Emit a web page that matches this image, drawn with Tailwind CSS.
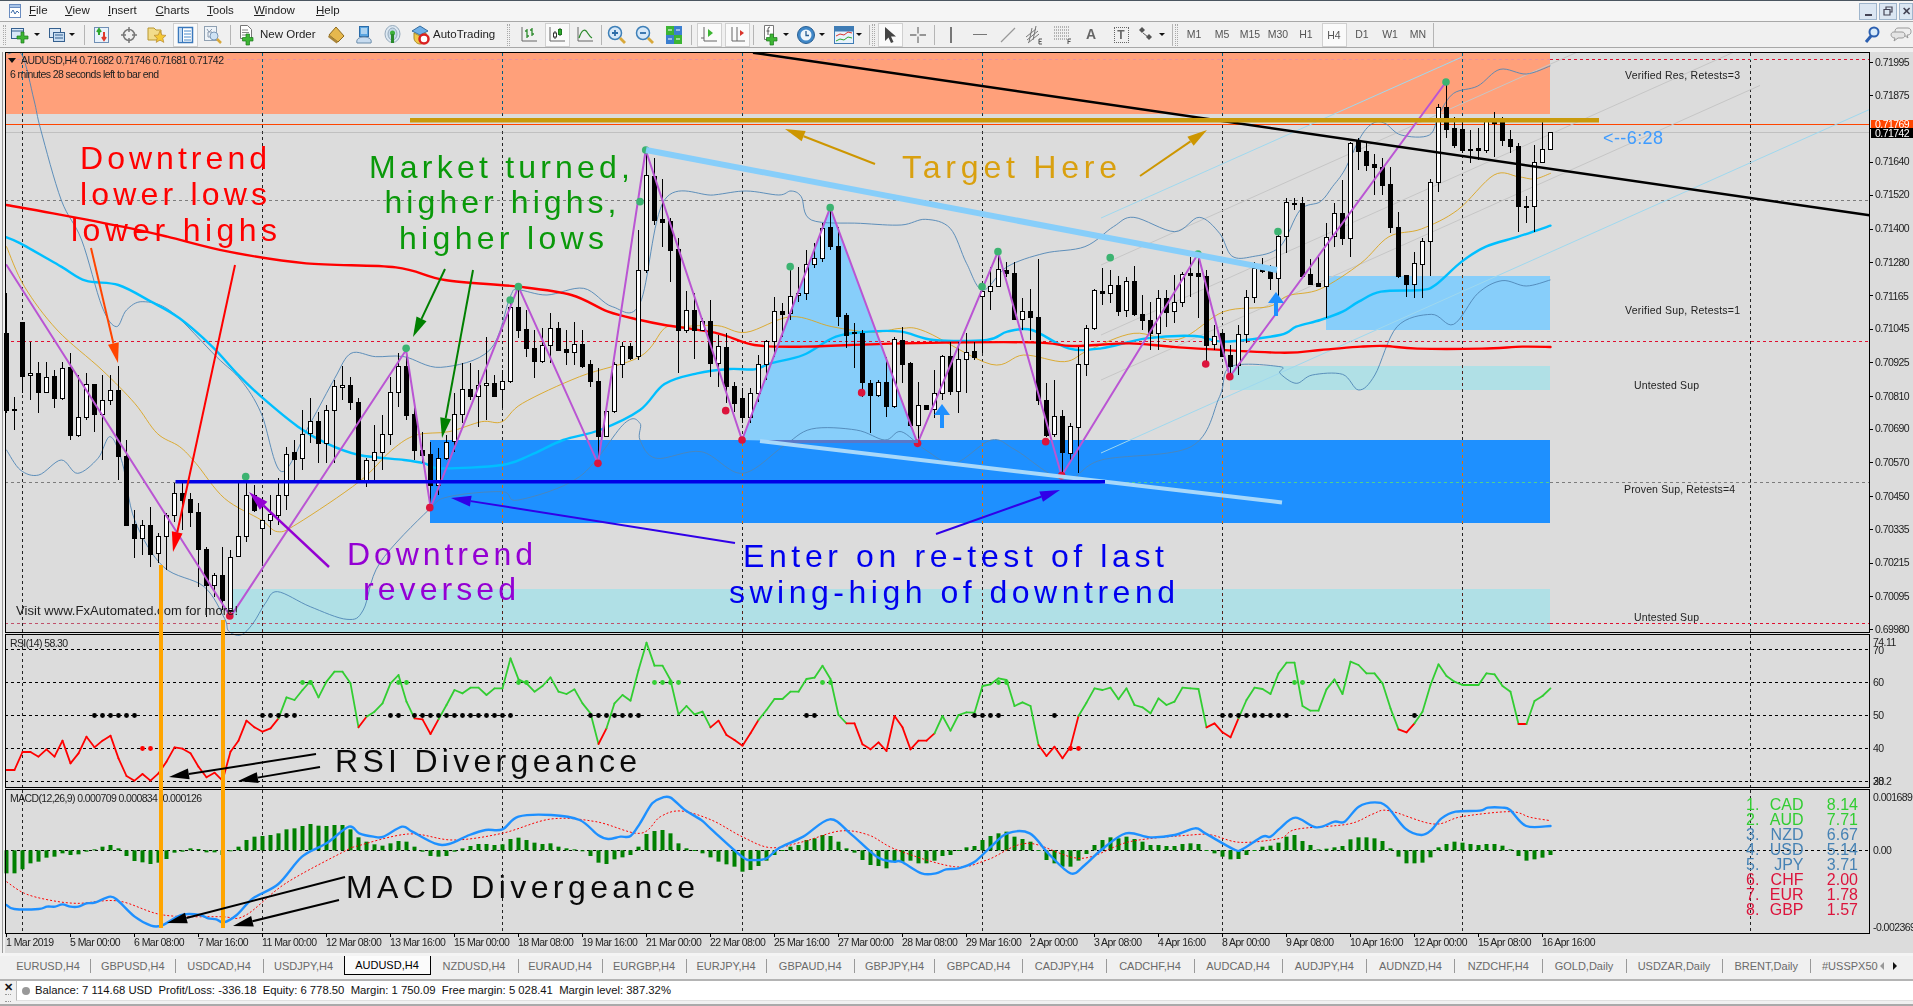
<!DOCTYPE html>
<html>
<head>
<meta charset="utf-8">
<script src="https://cdn.jsdelivr.net/npm/@tailwindcss/browser@4"></script>
</head>
<body class="m-0 overflow-hidden bg-[#f0f0f0]">
<div class="w-[1913px] h-[1006px] flex flex-col overflow-hidden bg-[#f0f0f0] text-[#222] [font-family:'Liberation_Sans',sans-serif]">

<!-- menu bar -->
<div class="h-[22px] shrink-0 flex items-center bg-[#f5f5f5] border-t border-t-[#4a5560] border-b border-b-[#a8a8a8] text-[11.5px]">
  <div class="w-[29px] flex justify-center">
    <svg width="16" height="16" viewBox="0 0 16 16"><rect x="2.5" y="1.5" width="11" height="13" fill="#fff" stroke="#6a8cc0"/><rect x="2.5" y="1.5" width="11" height="3" fill="#a8c4e8" stroke="#6a8cc0"/><path d="M4 10l2-3 2 4 2-3 2 2" fill="none" stroke="#3a6aa8"/></svg>
  </div>
  <span class="w-[36px]"><u>F</u>ile</span>
  <span class="w-[43px]"><u>V</u>iew</span>
  <span class="w-[47.5px]"><u>I</u>nsert</span>
  <span class="w-[51.5px]"><u>C</u>harts</span>
  <span class="w-[47px]"><u>T</u>ools</span>
  <span class="w-[62px]"><u>W</u>indow</span>
  <span><u>H</u>elp</span>
  <div class="ml-auto flex items-center gap-[2px] pr-[0px]">
    <div class="w-[18px] h-[17px] border border-[#9fb5cc] bg-[#dbe6f2] flex items-end justify-center pb-[3px]"><div class="w-[7px] h-[2px] bg-[#445]"></div></div>
    <div class="w-[18px] h-[17px] border border-[#9fb5cc] bg-[#dbe6f2] flex items-center justify-center"><svg width="10" height="10" viewBox="0 0 10 10"><path d="M3 3V1h6v5H7M1 3.5h6v5.500H1z" fill="none" stroke="#445" stroke-width="1.200"/></svg></div>
    <div class="w-[14px] h-[17px] border border-[#9fb5cc] bg-[#dbe6f2] flex items-center justify-center text-[11px] font-bold text-[#445]">✕</div>
  </div>
</div>

<!-- toolbar -->
<div class="h-[26px] shrink-0 flex items-center bg-[#f0f0f0] border-b border-b-[#a8a8a8] text-[11.5px] text-[#222]">
  <div class="w-[8px] flex justify-center"><div class="w-[3px] h-[20px] border-x border-dotted border-[#aaa]"></div></div>
  <!-- new chart -->
  <div class="w-[24px] flex justify-center"><svg width="20" height="20" viewBox="0 0 20 20"><rect x="1.500" y="3.500" width="12" height="10" fill="#d8e8f8" stroke="#35608f"/><path d="M1 6h13" stroke="#35608f"/><path d="M11 7h3v4h4v3h-4v4h-3v-4H7v-3h4z" fill="#3db534" stroke="#1c7a1c" stroke-width=".7"/></svg></div>
  <div class="w-[10px] flex justify-center"><div class="border-x-[3px] border-x-transparent border-t-[3px] border-t-[#111]"></div></div>
  <div class="w-[5px]"></div>
  <!-- profiles -->
  <div class="w-[20px] flex justify-center"><svg width="18" height="18" viewBox="0 0 18 18"><rect x="1.500" y="2.500" width="11" height="9" fill="#dbe8f5" stroke="#35608f"/><rect x="5.500" y="6.500" width="11" height="9" fill="#c6dcf2" stroke="#35608f"/><path d="M7 9h8M7 12h8" stroke="#35608f"/></svg></div>
  <div class="w-[10px] flex justify-center"><div class="border-x-[3px] border-x-transparent border-t-[3px] border-t-[#111]"></div></div>
  <div class="w-[7px]"></div>
  <div class="w-px h-[20px] bg-[#b5b5b5]"></div>
  <div class="w-[2px]"></div>
  <!-- market watch -->
  <div class="w-[28px] flex justify-center"><svg width="17" height="18" viewBox="0 0 17 18"><rect x="1.500" y="1.500" width="14" height="15" fill="#e8f2fb" stroke="#6f8fb5"/><path d="M6 9V4M4 6l2-3 2 3" fill="none" stroke="#2ea82e" stroke-width="2"/><path d="M11 6v7M9 11l2 3 2-3" fill="none" stroke="#e0392b" stroke-width="2"/></svg></div>
  <!-- crosshair -->
  <div class="w-[28px] flex justify-center"><svg width="18" height="18" viewBox="0 0 18 18"><circle cx="9" cy="9" r="5.500" fill="none" stroke="#777" stroke-width="1.500"/><path d="M9 1v5M9 12v5M1 9h5M12 9h5" stroke="#777" stroke-width="1.500"/></svg></div>
  <!-- navigator star -->
  <div class="w-[28px] flex justify-center"><svg width="20" height="19" viewBox="0 0 20 19"><path d="M1 3h6l2 2h5v10H1z" fill="#f2dc8a" stroke="#b8962e"/><path d="M13 6l1.800 4 4.200.4-3.200 2.800 1 4.200-3.800-2.300-3.800 2.300 1-4.200L7 10.400l4.200-.4z" fill="#f5c935" stroke="#b8882e" stroke-width=".7"/></svg></div>
  <!-- terminal pressed -->
  <div class="w-[28px] flex justify-center"><div class="w-[25px] h-[24px] bg-[#fafafa] border border-[#d0d0d0] flex items-center justify-center"><svg width="17" height="18" viewBox="0 0 17 18"><rect x="1.500" y="1.500" width="14" height="15" fill="#fff" stroke="#3a78bc" stroke-width="1.500"/><rect x="1.500" y="1.500" width="4" height="15" fill="#bcd7f2" stroke="#3a78bc"/><path d="M7 5h7M7 8h7M7 11h7M7 14h7" stroke="#4a8ccc"/></svg></div></div>
  <!-- tester -->
  <div class="w-[28px] flex justify-center"><svg width="20" height="20" viewBox="0 0 20 20"><rect x="1.500" y="1.500" width="12" height="14" fill="#eef3f8" stroke="#8fa0b2"/><path d="M4 4l2 3 3-3M5 7h4v5H5z" fill="none" stroke="#8a9aae"/><circle cx="11" cy="11" r="4" fill="#cfe3f5" stroke="#7d9ab8"/><path d="M14 14l4 4" stroke="#d8a83a" stroke-width="2.500"/></svg></div>
  <div class="w-[3px]"></div>
  <div class="w-px h-[20px] bg-[#b5b5b5]"></div>
  <div class="w-[7px]"></div>
  <!-- new order -->
  <div class="w-[18px] flex justify-center"><svg width="18" height="22" viewBox="0 0 18 22"><path d="M2.500 1.500h7l4 4v9h-11z" fill="#fff" stroke="#777"/><path d="M4 6h6M4 8.500h7M4 11h5" stroke="#888"/><path d="M8 10h3.500v3.500H15V17h-3.500v4H8v-4H4.500v-3.500H8z" fill="#3db534" stroke="#1c7a1c" stroke-width=".7"/></svg></div>
  <div class="w-[4px]"></div>
  <div class="w-[62px] whitespace-nowrap">New Order</div>
  <div class="w-[28px] flex justify-center"><svg width="18" height="18" viewBox="0 0 18 18"><path d="M9 1l8 9-6 6-9-7z" fill="#e6b84e" stroke="#8d6a1e"/><path d="M2 9l9 7-1.500 1.500L1 11z" fill="#a8843a"/></svg></div>
  <div class="w-[28px] flex justify-center"><svg width="18" height="20" viewBox="0 0 18 20"><rect x="4.500" y="1.500" width="9" height="10" fill="#5aa5e0" stroke="#2a6ba8"/><path d="M6 4h6M6 6h6M6 8h6" stroke="#fff"/><path d="M2 18c-1-3 1-6 7-6s8 3 7 6z" fill="#c8dcf0" stroke="#6a8caa"/></svg></div>
  <div class="w-[29px] flex justify-center"><svg width="17" height="19" viewBox="0 0 17 19"><ellipse cx="8.500" cy="9" rx="7.500" ry="8.500" fill="#dce8f2" stroke="#95a9bb"/><ellipse cx="8.500" cy="9" rx="4.500" ry="6" fill="#c6d8e8" stroke="#95a9bb"/><circle cx="8.500" cy="8" r="2.500" fill="#3bb03b"/><path d="M8.500 9v9" stroke="#2a8a2a" stroke-width="3"/></svg></div>
  <div class="w-[26px] flex justify-center"><svg width="19" height="20" viewBox="0 0 19 20"><path d="M1 6l8-5 8 5-8 4z" fill="#6fb0e8" stroke="#356c9e"/><path d="M3 8v5c0 3 3 6 6 6s6-2 6-6V8l-6 3z" fill="#f0c94a" stroke="#a88b28"/><circle cx="13" cy="14" r="4.500" fill="#fff" stroke="#d92020" stroke-width="2.500"/></svg></div>
  <div class="w-[73px] whitespace-nowrap">AutoTrading</div>
  <div class="w-[4px] flex justify-center"><div class="w-[3px] h-[22px] border-x border-dotted border-[#aaa]"></div></div>
  <div class="w-[5px]"></div>
  <!-- bar/candle/line -->
  <div class="w-[28px] flex justify-center"><svg width="18" height="18" viewBox="0 0 18 18"><path d="M2 1v14h15" fill="none" stroke="#666"/><path d="M7 3v9M5 5h2M7 10h2M12 2v8M10 4h2M12 8h2" stroke="#2c8a2c" stroke-width="1.300"/></svg></div>
  <div class="w-[28px] flex justify-center"><div class="w-[25px] h-[24px] bg-[#fafafa] border border-[#d0d0d0] flex items-center justify-center"><svg width="18" height="18" viewBox="0 0 18 18"><path d="M2 1v14h15" fill="none" stroke="#666"/><path d="M7 5v8M12 2v8" stroke="#333"/><rect x="5.500" y="7" width="3" height="4" fill="#fff" stroke="#333"/><rect x="10.500" y="3.500" width="3" height="5" fill="#2ea82e" stroke="#1c7a1c"/></svg></div></div>
  <div class="w-[28px] flex justify-center"><svg width="18" height="18" viewBox="0 0 18 18"><path d="M2 1v14h15" fill="none" stroke="#666"/><path d="M3 12c3-9 6-9 8-6s3 5 5 6" fill="none" stroke="#2c8a2c" stroke-width="1.300"/></svg></div>
  <div class="w-[2px]"></div>
  <div class="w-px h-[20px] bg-[#b5b5b5]"></div>
  <div class="w-[1px]"></div>
  <!-- zoom -->
  <div class="w-[28px] flex justify-center"><svg width="20" height="20" viewBox="0 0 20 20"><circle cx="8" cy="8" r="6.500" fill="#d6e8f8" stroke="#3d7fb8" stroke-width="1.500"/><path d="M5 8h6M8 5v6" stroke="#2c6ca8" stroke-width="1.800"/><path d="M13 13l5 5" stroke="#d8a83a" stroke-width="2.800"/></svg></div>
  <div class="w-[28px] flex justify-center"><svg width="20" height="20" viewBox="0 0 20 20"><circle cx="8" cy="8" r="6.500" fill="#d6e8f8" stroke="#3d7fb8" stroke-width="1.500"/><path d="M5 8h6" stroke="#2c6ca8" stroke-width="1.800"/><path d="M13 13l5 5" stroke="#d8a83a" stroke-width="2.800"/></svg></div>
  <div class="w-[1px]"></div>
  <div class="w-[28px] flex justify-center"><svg width="18" height="20" viewBox="0 0 18 20"><rect x="1" y="1" width="8" height="9" fill="#3db534"/><rect x="9" y="1" width="8" height="9" fill="#3b7fd0"/><rect x="1" y="10" width="8" height="9" fill="#3b7fd0"/><rect x="9" y="10" width="8" height="9" fill="#3db534"/><path d="M3 5h4M11 5h4M3 14h4M11 14h4" stroke="#fff"/></svg></div>
  <div class="w-[3px]"></div>
  <div class="w-px h-[20px] bg-[#b5b5b5]"></div>
  <div class="w-[3px]"></div>
  <div class="w-[28px] flex justify-center"><div class="w-[25px] h-[24px] bg-[#fafafa] border border-[#d0d0d0] flex items-center justify-center"><svg width="18" height="18" viewBox="0 0 18 18"><path d="M4 1v14h13M1 12h3" fill="none" stroke="#666"/><path d="M8 3l5 4-5 4z" fill="#3db534"/></svg></div></div>
  <div class="w-[28px] flex justify-center"><div class="w-[25px] h-[24px] bg-[#fafafa] border border-[#d0d0d0] flex items-center justify-center"><svg width="18" height="18" viewBox="0 0 18 18"><path d="M4 1v14h13M9 1v14" fill="none" stroke="#666"/><path d="M16 7l-4-3v6z" fill="#d9342b"/></svg></div></div>
  <div class="w-[2px]"></div>
  <div class="w-px h-[20px] bg-[#b5b5b5]"></div>
  <div class="w-[5px]"></div>
  <div class="w-[24px] flex justify-center"><svg width="18" height="22" viewBox="0 0 18 22"><path d="M2.500 1.500h9v14h-9z" fill="#fff" stroke="#777"/><path d="M6 11V5q0-2 2-2M4.500 7h3" fill="none" stroke="#555"/><path d="M8 10h3.500v3.500H15V17h-3.500v4H8v-4H4.500v-3.500H8z" fill="#3db534" stroke="#1c7a1c" stroke-width=".7"/></svg></div>
  <div class="w-[6px] flex justify-center"><div class="border-x-[3px] border-x-transparent border-t-[3px] border-t-[#111]"></div></div>
  <div class="w-[5px]"></div>
  <div class="w-[24px] flex justify-center"><svg width="20" height="20" viewBox="0 0 20 20"><circle cx="10" cy="10" r="8.500" fill="#3f87c8" stroke="#2a5f92"/><circle cx="10" cy="10" r="5.500" fill="#eef5fb"/><path d="M10 6v4.500h3" fill="none" stroke="#2a5f92" stroke-width="1.300"/></svg></div>
  <div class="w-[8px] flex justify-center"><div class="border-x-[3px] border-x-transparent border-t-[3px] border-t-[#111]"></div></div>
  <div class="w-[6px]"></div>
  <div class="w-[24px] flex justify-center"><svg width="20" height="18" viewBox="0 0 20 18"><rect x=".5" y=".5" width="19" height="17" fill="#e8f2fb" stroke="#3f7cb5"/><rect x=".5" y=".5" width="19" height="5" fill="#3f7cb5"/><path d="M2 10l4-2 4 1 4-3 4 1" fill="none" stroke="#d9342b"/><path d="M2 15l4-2 4 1 4-3 4 1" fill="none" stroke="#2ea82e"/></svg></div>
  <div class="w-[6px] flex justify-center"><div class="border-x-[3px] border-x-transparent border-t-[3px] border-t-[#111]"></div></div>
  <div class="w-[7px]"></div>
  <div class="w-px h-[20px] bg-[#b5b5b5]"></div>
  <div class="w-[6px] flex justify-center"><div class="w-[3px] h-[22px] border-x border-dotted border-[#aaa]"></div></div>
  <!-- cursor -->
  <div class="w-[28px] flex justify-center"><div class="w-[25px] h-[24px] bg-[#fafafa] border border-[#d0d0d0] flex items-center justify-center"><svg width="14" height="18" viewBox="0 0 14 18"><path d="M2 1v14l3.500-3.500L8 17l2.500-1L8 10.500h5z" fill="#444"/></svg></div></div>
  <div class="w-[28px] flex justify-center"><svg width="18" height="18" viewBox="0 0 18 18"><path d="M9 1v6.500M9 10.500V17M1 9h6.500M10.500 9H17" stroke="#777" stroke-width="1.300"/></svg></div>
  <div class="w-[2px]"></div>
  <div class="w-px h-[20px] bg-[#b5b5b5]"></div>
  <div class="w-[2px]"></div>
  <div class="w-[28px] flex justify-center"><div class="w-[1.500px] h-[16px] bg-[#777]"></div></div>
  <div class="w-[29px] flex justify-center"><div class="w-[14px] h-[1.500px] bg-[#777]"></div></div>
  <div class="w-[27px] flex justify-center"><svg width="16" height="16" viewBox="0 0 16 16"><path d="M1 15L15 1" stroke="#999" stroke-width="1.300"/></svg></div>
  <div class="w-[28px] flex justify-center"><svg width="20" height="20" viewBox="0 0 20 20"><path d="M1 12l10-8M2 15l11-9M3 18l11-9M7 3l-3 14M11 1l-3 14" stroke="#777"/><path d="M17 14h-3v5h3M14 16.500h2.500" fill="none" stroke="#555"/></svg></div>
  <div class="w-[28px] flex justify-center"><svg width="20" height="20" viewBox="0 0 20 20"><path d="M1 2h15M1 5h15M1 8h15M1 11h15M1 14h13" stroke="#777" stroke-dasharray="1 1"/><path d="M15 19v-5h3M15 16.500h2.500" fill="none" stroke="#555"/></svg></div>
  <div class="w-[28px] flex justify-center font-bold text-[14px] text-[#666]">A</div>
  <div class="w-[2px]"></div>
  <div class="w-[28px] flex justify-center"><div class="w-[15px] h-[16px] border border-dotted border-[#666] flex items-center justify-center font-bold text-[12px] leading-none text-[#666]">T</div></div>
  <div class="w-[22px] flex justify-center"><svg width="18" height="18" viewBox="0 0 18 18"><path d="M5 1l3 3-3 3-3-3z" fill="#555"/><path d="M12 8l3 3-3 3-3-3z" fill="#555"/><path d="M6 7l5 4" stroke="#555"/></svg></div>
  <div class="w-[10px] flex justify-center"><div class="border-x-[3px] border-x-transparent border-t-[3px] border-t-[#111]"></div></div>
  <div class="w-[5px]"></div>
  <div class="w-px h-[22px] bg-[#b5b5b5]"></div>
  <div class="w-[7px] flex justify-center"><div class="w-[3px] h-[22px] border-x border-dotted border-[#aaa]"></div></div>
  <div class="flex items-center text-[10.5px] text-[#555] text-center">
    <div class="w-[28px]">M1</div><div class="w-[28px]">M5</div><div class="w-[28px]">M15</div><div class="w-[28px]">M30</div><div class="w-[28px]">H1</div>
    <div class="w-[28px] flex justify-center"><div class="w-[25px] h-[24px] leading-[22px] bg-[#fafafa] border border-[#d0d0d0]">H4</div></div>
    <div class="w-[28px]">D1</div><div class="w-[28px]">W1</div><div class="w-[28px]">MN</div>
  </div>
  <div class="w-px h-[24px] bg-[#b5b5b5] ml-[1px]"></div>
  <div class="ml-auto flex items-center gap-[10px] pr-[1px]">
    <svg width="16" height="18" viewBox="0 0 16 18"><circle cx="10" cy="6" r="4.500" fill="#d8ebfb" stroke="#2b5fb0" stroke-width="2"/><path d="M7 10L2 16" stroke="#2b5fb0" stroke-width="3"/></svg>
    <svg width="22" height="17" viewBox="0 0 22 17"><path d="M8 2h10c4 0 4 7 0 7h-1l1 3-4-3H8C4 9 4 2 8 2z" fill="#eee" stroke="#999"/><path d="M4 6h8c4 0 4 6 0 6H8l-4 3 1-3C0 12 0 6 4 6z" fill="#e4e4e4" stroke="#999"/></svg>
  </div>
</div>
<div class="h-[4px] shrink-0 bg-[#f0f0f0]"></div>

<!-- chart canvas -->
<svg id="chart" class="block shrink-0" width="1913" height="904" viewBox="0 52 1913 904">
  <rect x="0" y="52" width="1913" height="904" fill="#dcdcdc"/>
  <rect x="0" y="52" width="5" height="904" fill="#f0f0f0"/>
  <rect x="2" y="52" width="1" height="904" fill="#999"/>
  <rect x="0" y="953" width="1913" height="3" fill="#f4f4f4"/>
  <g id="under"></g>
  <g class="text-[10.500px] fill-[#222]">
    <path d="M8 58h8l-4 5z" fill="#111"/>
    <text x="21" y="64" textLength="203">AUDUSD,H4  0.71682 0.71746 0.71681 0.71742</text>
    <text x="10" y="77.500" textLength="149">6 minutes 28 seconds left to bar end</text>
    <text x="1625" y="79" textLength="115">Verified Res, Retests=3</text>
    <text x="1625" y="314" textLength="115">Verified Sup, Retests=1</text>
    <text x="1634" y="389" textLength="65">Untested Sup</text>
    <text x="1624" y="493" textLength="111">Proven Sup, Retests=4</text>
    <text x="1634" y="621" textLength="65">Untested Sup</text>
    <text x="16" y="614.500" textLength="222" class="text-[13px]">Visit www.FxAutomated.com for more!</text>
    <text x="10" y="647" textLength="58">RSI(14) 58.30</text>
    <text x="10" y="802" textLength="192">MACD(12,26,9) 0.000709 0.000834 -0.000126</text>
  </g>
  <g class="text-[10.500px] fill-[#222] tracking-[-.55px]">
    <text x="1875" y="65.500">0.71995</text>
    <text x="1875" y="99">0.71875</text>
    <text x="1875" y="165">0.71640</text>
    <text x="1875" y="198">0.71520</text>
    <text x="1875" y="232">0.71400</text>
    <text x="1875" y="266">0.71280</text>
    <text x="1875" y="300">0.71165</text>
    <text x="1875" y="332">0.71045</text>
    <text x="1875" y="366">0.70925</text>
    <text x="1875" y="400">0.70810</text>
    <text x="1875" y="432">0.70690</text>
    <text x="1875" y="466">0.70570</text>
    <text x="1875" y="500">0.70450</text>
    <text x="1875" y="533">0.70335</text>
    <text x="1875" y="566">0.70215</text>
    <text x="1875" y="600">0.70095</text>
    <text x="1875" y="633">0.69980</text>
    <text x="1873" y="646">74.11</text>
    <text x="1873" y="654">70</text>
    <text x="1873" y="686">60</text>
    <text x="1873" y="719">50</text>
    <text x="1873" y="752">40</text>
    <text x="1873" y="785">30</text>
    <text x="1873" y="785">28.2</text>
    <text x="1873" y="801">0.001689</text>
    <text x="1873" y="854">0.00</text>
    <text x="1873" y="931">-0.002369</text>
  </g>
  <g class="tracking-[-.55px]">
    <rect x="1871" y="120" width="42" height="9" fill="#ff4500"/>
    <text x="1875" y="128" class="text-[10.500px] fill-[#fff]">0.71769</text>
    <rect x="1871" y="128" width="42" height="10" fill="#000"/>
    <text x="1875" y="137" class="text-[10.500px] fill-[#fff]">0.71742</text>
  </g>
  <g id="over"></g>
  <!-- currency strength -->
  <g class="text-[16px]">
    <g class="fill-[#32cd32]"><text x="1746" y="810">1.</text><text x="1803.500" y="810" text-anchor="end">CAD</text><text x="1858" y="810" text-anchor="end">8.14</text>
    <text x="1746" y="825">2.</text><text x="1803.500" y="825" text-anchor="end">AUD</text><text x="1858" y="825" text-anchor="end">7.71</text></g>
    <g class="fill-[#4682b4]"><text x="1746" y="840">3.</text><text x="1803.500" y="840" text-anchor="end">NZD</text><text x="1858" y="840" text-anchor="end">6.67</text>
    <text x="1746" y="855">4.</text><text x="1803.500" y="855" text-anchor="end">USD</text><text x="1858" y="855" text-anchor="end">5.14</text>
    <text x="1746" y="870">5.</text><text x="1803.500" y="870" text-anchor="end">JPY</text><text x="1858" y="870" text-anchor="end">3.71</text></g>
    <g class="fill-[#dc143c]"><text x="1746" y="885">6.</text><text x="1803.500" y="885" text-anchor="end">CHF</text><text x="1858" y="885" text-anchor="end">2.00</text>
    <text x="1746" y="900">7.</text><text x="1803.500" y="900" text-anchor="end">EUR</text><text x="1858" y="900" text-anchor="end">1.78</text>
    <text x="1746" y="915">8.</text><text x="1803.500" y="915" text-anchor="end">GBP</text><text x="1858" y="915" text-anchor="end">1.57</text></g>
  </g>
  <!-- hand annotations -->
  <g class="text-[32px]">
    <g class="fill-[#ff0000]">
      <text x="80" y="169" textLength="187">Downtrend</text>
      <text x="80" y="205" textLength="187">lower lows</text>
      <text x="71" y="241" textLength="206">lower highs</text>
    </g>
    <g class="fill-[#0a990a]">
      <text x="369" y="178" textLength="261">Market turned,</text>
      <text x="384.500" y="213" textLength="232">higher highs,</text>
      <text x="399" y="249" textLength="205">higher lows</text>
    </g>
    <g class="fill-[#9400d3]">
      <text x="347" y="565" textLength="186">Downtrend</text>
      <text x="363" y="600" textLength="153">reversed</text>
    </g>
    <text x="902" y="178" textLength="215" class="fill-[#d9a00f]">Target Here</text>
    <g class="fill-[#0000ee]">
      <text x="743" y="567" textLength="421">Enter on re-test of last</text>
      <text x="729" y="603" textLength="446">swing-high of downtrend</text>
    </g>
    <g class="fill-[#0a0a0a]">
      <text x="335" y="772" textLength="302">RSI Divergeance</text>
      <text x="346" y="898" textLength="349">MACD Divergeance</text>
    </g>
  </g>
  <text x="1603" y="144" textLength="60" class="text-[18px] fill-[#3d9bff]">&lt;--6:28</text>
</svg>

<!-- date axis overlay row sits on the canvas -->
<div class="relative h-0">
  <div class="absolute left-[6px] bottom-[5px] flex text-[10.500px] tracking-[-.55px] text-[#222] whitespace-nowrap">
    <div class="w-[64px]">1 Mar 2019</div><div class="w-[64px]">5 Mar 00:00</div><div class="w-[64px]">6 Mar 08:00</div><div class="w-[64px]">7 Mar 16:00</div><div class="w-[64px]">11 Mar 00:00</div><div class="w-[64px]">12 Mar 08:00</div><div class="w-[64px]">13 Mar 16:00</div><div class="w-[64px]">15 Mar 00:00</div><div class="w-[64px]">18 Mar 08:00</div><div class="w-[64px]">19 Mar 16:00</div><div class="w-[64px]">21 Mar 00:00</div><div class="w-[64px]">22 Mar 08:00</div><div class="w-[64px]">25 Mar 16:00</div><div class="w-[64px]">27 Mar 00:00</div><div class="w-[64px]">28 Mar 08:00</div><div class="w-[64px]">29 Mar 16:00</div><div class="w-[64px]">2 Apr 00:00</div><div class="w-[64px]">3 Apr 08:00</div><div class="w-[64px]">4 Apr 16:00</div><div class="w-[64px]">8 Apr 00:00</div><div class="w-[64px]">9 Apr 08:00</div><div class="w-[64px]">10 Apr 16:00</div><div class="w-[64px]">12 Apr 00:00</div><div class="w-[64px]">15 Apr 08:00</div><div class="w-[64px]">16 Apr 16:00</div>
  </div>
</div>

<!-- symbol tabs -->
<div class="h-[25px] shrink-0 flex items-start pl-[6px] pt-0 bg-[#f0f0f0] border-b-2 border-b-[#b4b4b4] text-[11px] text-[#6a6a6a] whitespace-nowrap">
  <div class="w-[85px] h-[14px] mt-[3px] border-r border-[#999] text-center leading-[14px]">EURUSD,H4</div>
  <div class="w-[84.500px] h-[14px] mt-[3px] border-r border-[#999] text-center leading-[14px]">GBPUSD,H4</div>
  <div class="w-[88px] h-[14px] mt-[3px] border-r border-[#999] text-center leading-[14px]">USDCAD,H4</div>
  <div class="w-[80px] h-[14px] mt-[3px] text-center leading-[14px]">USDJPY,H4</div>
  <div class="w-[87px] h-[19px] bg-[#fbfbfb] border-x border-b border-[#000] text-[#000] text-center leading-[19px]">AUDUSD,H4</div>
  <div class="w-[88px] h-[14px] mt-[3px] border-r border-[#999] text-center leading-[14px]">NZDUSD,H4</div>
  <div class="w-[84px] h-[14px] mt-[3px] border-r border-[#999] text-center leading-[14px]">EURAUD,H4</div>
  <div class="w-[84px] h-[14px] mt-[3px] border-r border-[#999] text-center leading-[14px]">EURGBP,H4</div>
  <div class="w-[80px] h-[14px] mt-[3px] border-r border-[#999] text-center leading-[14px]">EURJPY,H4</div>
  <div class="w-[88.500px] h-[14px] mt-[3px] border-r border-[#999] text-center leading-[14px]">GBPAUD,H4</div>
  <div class="w-[80px] h-[14px] mt-[3px] border-r border-[#999] text-center leading-[14px]">GBPJPY,H4</div>
  <div class="w-[88px] h-[14px] mt-[3px] border-r border-[#999] text-center leading-[14px]">GBPCAD,H4</div>
  <div class="w-[83.500px] h-[14px] mt-[3px] border-r border-[#999] text-center leading-[14px]">CADJPY,H4</div>
  <div class="w-[88px] h-[14px] mt-[3px] border-r border-[#999] text-center leading-[14px]">CADCHF,H4</div>
  <div class="w-[88px] h-[14px] mt-[3px] border-r border-[#999] text-center leading-[14px]">AUDCAD,H4</div>
  <div class="w-[84.500px] h-[14px] mt-[3px] border-r border-[#999] text-center leading-[14px]">AUDJPY,H4</div>
  <div class="w-[88px] h-[14px] mt-[3px] border-r border-[#999] text-center leading-[14px]">AUDNZD,H4</div>
  <div class="w-[87.500px] h-[14px] mt-[3px] border-r border-[#999] text-center leading-[14px]">NZDCHF,H4</div>
  <div class="w-[84px] h-[14px] mt-[3px] border-r border-[#999] text-center leading-[14px]">GOLD,Daily</div>
  <div class="w-[96px] h-[14px] mt-[3px] border-r border-[#999] text-center leading-[14px]">USDZAR,Daily</div>
  <div class="w-[88.500px] h-[14px] mt-[3px] border-r border-[#999] text-center leading-[14px]">BRENT,Daily</div>
  <div class="w-[67px] h-[14px] mt-[3px] pl-[11px] overflow-hidden leading-[14px]">#USSPX500,Daily</div>
  <div class="w-[8px] h-[14px] mt-[3px] flex items-center justify-center"><div class="border-y-[4px] border-y-transparent border-r-[4px] border-r-[#999]"></div></div>
  <div class="w-[18px] h-[14px] mt-[3px] flex items-center justify-center"><div class="border-y-[4px] border-y-transparent border-l-[4px] border-l-[#111]"></div></div>
</div>

<!-- status bar -->
<div class="flex-1 flex items-start bg-[#f0f0f0] border-b-2 border-b-[#aaa]">
  <div class="w-[16px] flex flex-col items-center pt-[1px]">
    <span class="text-[11px] font-bold leading-[11px] text-[#111]">✕</span>
    <div class="w-[6px] h-[8px] mt-[1px] border-y border-dotted border-[#999]"></div>
  </div>
  <div class="flex-1 h-[20px] bg-white border-b border-[#e0e0e0] border-l border-l-[#bbb] flex items-center pl-[5px] text-[11.300px] text-[#111]">
    <div class="w-[8px] h-[8px] rounded-full bg-[#999] mr-[5px]"></div>
    <span class="whitespace-pre">Balance: 7 114.68 USD  Profit/Loss: -336.18  Equity: 6 778.50  Margin: 1 750.09  Free margin: 5 028.41  Margin level: 387.32%</span>
  </div>
</div>
</div>

<script>
const NS='http://www.w3.org/2000/svg';
const under=document.getElementById('under'), over=document.getElementById('over');
function el(t,a,p){const e=document.createElementNS(NS,t);for(const k in a)e.setAttribute(k,a[k]);(p||under).appendChild(e);return e;}
function rect(x,y,w,h,f,p){return el('rect',{x,y,width:w,height:h,fill:f},p);}
function line(x1,y1,x2,y2,s,w,o,p){const a={x1,y1,x2,y2,stroke:s,'stroke-width':w||1};if(o)Object.assign(a,o);return el('line',a,p);}
function pl(pts,s,w,o,p){const a={points:pts.map(q=>q.join(',')).join(' '),fill:'none',stroke:s,'stroke-width':w,'stroke-linejoin':'round','stroke-linecap':'round'};if(o)Object.assign(a,o);return el('polyline',a,p);}
// smooth curve through points (Catmull-Rom)
function sm(pts,s,w,o,p){
  let d='M'+pts[0][0]+' '+pts[0][1];
  for(let i=0;i<pts.length-1;i++){
    const a=pts[Math.max(i-1,0)],b=pts[i],c=pts[i+1],e=pts[Math.min(i+2,pts.length-1)];
    d+=' C'+(b[0]+(c[0]-a[0])/6)+' '+(b[1]+(c[1]-a[1])/6)+' '+(c[0]-(e[0]-b[0])/6)+' '+(c[1]-(e[1]-b[1])/6)+' '+c[0]+' '+c[1];
  }
  const at={d,fill:'none',stroke:s,'stroke-width':w,'stroke-linejoin':'round','stroke-linecap':'round'};if(o)Object.assign(at,o);return el('path',at,p);
}
// zoom-coordinate converters
const Z=(x0,sx,y0,a)=>{const r=[];for(let i=0;i<a.length;i+=2)r.push([x0+a[i]/sx,y0+a[i+1]/3]);return r;};
const L=a=>Z(0,2.45,130,a),M=a=>Z(640,2.45,130,a),R=a=>Z(1280,2.477,130,a);
const crisp={'shape-rendering':'crispEdges'};

// zones
rect(5,52,1545,62,'#ffa07a');
rect(430,440,1120,83,'#1e90ff');
rect(1326,276,224,54,'#87cefa');
rect(1230,366,320,24,'#b0e0e6');
rect(230,589,1320,43,'#b0e0e6');
el('polygon',{points:'742,440 830,208 917.5,443',fill:'#87cefa'});

// horizontal dashed grid of the price pane
const dash={'stroke-dasharray':'3 3',...crisp};
line(5,59.5,1550,59.5,'#e88fa0',1,dash);line(1550,59.5,1870,59.5,'#e01030',1,dash);
line(5,200.5,1870,200.5,'#7c7c7c',1,dash);
line(5,341.5,1870,341.5,'#e01030',1,dash);
line(5,482.5,430,482.5,'#7c7c7c',1,dash);line(430,482.5,1550,482.5,'#50d090',1,dash);line(1550,482.5,1870,482.5,'#7c7c7c',1,dash);
line(5,623.5,1550,623.5,'#c0506a',1,dash);line(1550,623.5,1870,623.5,'#e01030',1,dash);
line(5,132.5,1870,132.5,'#c0c0c0',1,crisp);
line(5,124.5,1870,124.5,'#ff4500',1.4,crisp);

// vertical grid, drawn as xor-like difference so it changes over the zones
[22.5,262.5,502.5,742.5,982.5,1222.5,1462.5,1750.5].forEach(x=>{
  [[53,632],[635,787],[790,933]].forEach(s=>{
    line(x,s[0],x,s[1],'#fff',1,{'stroke-dasharray':'3 3','style':'mix-blend-mode:difference',...crisp});
  });
});
// RSI levels / MACD zero
[649.5,682.5,715.5,748.5,781.5].forEach(y=>line(5,y,1870,y,'#000',1,dash));
line(5,850.5,1870,850.5,'#000',1,dash);

// channel lines
[[453,'#9fd8ee'],[218,'#9fd8ee'],[265,'#c6c6c6'],[335,'#c6c6c6'],[380,'#c6c6c6']].forEach(c=>{
  const x2=1869,y2=c[0]-0.447*(x2-1101);
  if(c[0]===218) line(1101,218,1462,57,c[1],1);
  else if(c[1]==='#c6c6c6') line(1101,c[0],1760,c[0]-0.447*659,c[1],1);
  else line(1101,c[0],x2,y2,c[1],1);
});
// Bollinger
const boll='#4f86b6';
sm([[8,54],[22,55],[34,100]].concat(L([100,0,150,210,200,330,250,530,285,590,310,540,350,515,420,545,530,680,590,750,640,850,690,1025,760,880,820,745,860,670,920,680,990,680,1080,712,1200,660,1250,500,1270,480,1340,495,1430,475,1500,530,1568,520])).concat(M([60,210,180,195,260,183,340,195,370,183,395,200,420,270,540,280,640,285,700,268,760,295,800,400,840,480,900,410,990,370,1090,350,1160,290,1210,262,1310,305,1370,262,1420,310,1450,378,1500,380,1568,350])).concat(R([50,240,100,215,130,170,160,120])).concat(Z(1280,2.477,0,[200,410,230,370,260,370,300,405,370,405,395,340,430,280,490,258,545,208,610,222,669,198])),boll,.9);
sm(L([16,960,50,1020,95,1035,150,990,190,1030,240,985,270,920,300,1000,330,1170,400,1310,500,1370,550,1465,560,1503,590,1515,620,1480,650,1420,680,1385,760,1430,850,1468,890,1440,930,1300,1050,1140,1100,1100,1230,1085,1270,1110,1420,1040,1530,880,1568,880])
 .concat(M([0,930,40,985,150,965,250,1030,350,950,420,897,530,900,600,930,640,905,700,960,770,1000,860,930,920,960,1040,1050,1130,990,1350,950,1420,800,1447,710,1568,710]))
 .concat(R([0,730,40,760,80,735,155,733,195,780,235,735,290,590,375,553,430,583,490,490,550,452,610,468,669,450])),boll,.9);
// thin orange MA
sm(L([16,350,60,470,140,600,250,720,330,820,385,910,440,950,480,1000,550,1105,640,1170,680,1205,730,1180,880,1055,960,960,1020,915,1100,905,1180,875,1230,875,1280,820,1420,740,1568,680])
 .concat(M([60,595,100,590,190,587,260,607,370,560,470,590,570,607,640,595,700,605,860,703,940,675,1040,695,1100,660,1210,610,1320,628,1430,545,1540,530]))
 .concat(R([20,497,100,477,200,400,270,320,350,297,440,240,530,135,590,140,630,147,670,130])),'#daa520',.9);
// cyan MA
sm(L([16,322,50,340,150,410,210,452,290,465,370,515,440,565,520,650,580,730,640,800,730,890,800,940,880,975,990,990,1040,1000,1080,1015,1230,1005,1300,975,1380,930,1470,900,1568,840])
 .concat(M([60,762,140,730,220,717,280,718,320,700,400,675,480,620,560,605,640,605,720,630,850,630,900,605,960,600,1050,655,1130,655,1240,625,1360,618,1430,635,1568,615]))
 .concat(R([40,590,100,570,155,545,195,515,250,485,350,480,385,465,450,395,510,350,590,320,670,287])),'#00bfff',2.4);
// red MA
sm(L([16,225,130,250,300,290,410,320,560,365,750,400,970,412,1090,450,1270,470,1400,495,1490,545,1568,570])
 .concat(M([60,585,190,610,280,645,400,650,640,640,960,637,1060,648,1200,640,1320,652,1568,668]))
 .concat(R([100,660,200,650,260,648,340,656,500,656,600,650,670,651])),'#ff0000',2.4);

// candles: top bottom high low colour; values are in zoomed rows
const G1="610 840 490 850 b;838 842 800 900 b;577 738 577 790 b;730 737 635 810 w;730 788 695 850 b;742 788 695 790 w;738 806 720 835 b;715 805 695 810 w;712 917 670 930 b;862 917 735 920 w;762 862 730 870 w;762 854 762 905 b;812 854 735 990 w;780 812 735 825 w;780 980 708 1050 b;978 1185 930 1185 b;1183 1226 1140 1285 b;1186 1226 1170 1275 w;1186 1272 1130 1310 b;1220 1270 1210 1300 w;1155 1220 1150 1320 w;1090 1157 1060 1175 w;1090 1110 1060 1200 b;1108 1148 1090 1190 b;1148 1257 1120 1370 b;1257 1365 1250 1460 b;1335 1365 1330 1400 w;1335 1410 1250 1440 b;1283 1440 1260 1450 w;1220 1280 1060 1280 w;1095 1220 1040 1235 w;1095 1140 1065 1145 b;1172 1195 1100 1300 w;1153 1170 1095 1215 w;1095 1155 1045 1185 w;972 1095 950 1140 w;968 988 930 1055 b;913 985 840 1020 w;875 910 805 940 w;873 940 845 1000 b;840 940 825 1000 w;770 840 750 1000 w;767 772 708 810 w;765 818 740 840 b;816 1052 805 1060 b;990 1055 985 1070 w;968 990 885 1060 w;913 968 855 1020 w;787 913 740 945 w;708 787 670 830 w;708 855 660 870 b;853 962 810 990 b;960 975 905 1000 b;972 1065 935 1130 b;985 1065 955 1095 w;937 985 915 990 w;853 935 790 965 w;778 853 700 880 w;778 800 700 810 b;767 800 720 890 w;760 767 620 870 w;760 798 735 800 b;755 778 720 835 w;532 755 520 760 w;532 600 470 625 b;598 655 540 680 b;655 695 600 745 b;645 695 595 700 w;595 645 550 700 w;595 660 575 660 b;657 668 600 705 b;643 668 575 705 w;643 708 600 715 b;703 755 690 770 b;755 920 715 1000 b;845 920 840 920 w;702 845 695 850 w;650 702 635 745 w;650 685 640 690 b;420 680 300 690 w";
const G2="137 420 60 430 w;138 270 85 285 b;268 278 148 350 b;275 360 265 455 b;358 600 325 728 b;542 600 483 610 w;542 602 490 688 b;573 600 565 600 w;573 700 510 740 b;650 700 615 770 w;652 770 610 820 b;768 820 755 845 b;805 862 775 880 b;790 862 775 880 w;703 790 675 815 w;635 703 630 750 w;545 635 500 680 w;544 552 520 620 b;500 550 410 570 w;490 497 410 515 w;403 490 360 510 w;385 403 340 415 w;295 385 280 395 w;293 350 235 360 b;348 558 290 588 b;556 615 548 655 b;607 611 580 715 b;609 758 600 800 b;760 795 750 908 b;758 795 750 800 w;758 828 680 862 b;628 830 620 835 w;630 702 590 760 b;700 885 695 890 b;825 885 755 930 w;825 838 825 840 b;790 838 720 865 w;678 790 675 810 w;678 785 635 795 b;688 785 635 848 w;668 688 610 790 w;663 682 635 690 b;485 500 460 670 w;468 485 410 540 w;418 470 370 472 w;420 430 395 440 b;430 568 395 570 b;545 568 505 600 w;543 563 478 630 b;562 812 388 825 b;812 915 760 920 b;858 912 750 920 w;858 968 840 1025 b;888 970 880 990 w;702 892 650 1030 w;595 702 585 738 w;480 595 478 600 w;484 490 415 525 b;465 490 420 520 w;465 543 438 558 b;455 541 440 560 w;453 553 408 558 b;553 572 495 600 b;570 610 515 660 b;505 610 480 660 w;505 548 480 590 b;517 545 435 578 w;433 517 425 530 w;429 435 380 500 b;430 440 370 565 b;438 645 420 700 b;620 643 585 660 w;610 678 605 680 b;675 710 645 740 b;612 707 585 735 w;502 612 480 640 w;415 502 395 520 w;410 425 385 430 b;423 445 405 480 b;320 445 300 500 w";
const G3="217 320 205 370 w;219 221 205 240 b;219 438 200 440 b;432 462 388 462 b;460 470 380 472 b;322 468 280 565 w;250 320 220 350 w;250 326 150 345 b;40 325 35 380 w;35 65 25 120 b;63 105 40 123 b;102 113 72 195 b;112 165 85 195 b;162 292 112 310 b;292 440 245 445 b;435 463 435 500 b;400 463 365 505 w;335 403 325 505 w;158 335 148 438 w";
const G4="322 547 312 575 w;322 388 245 415 b;385 435 350 445 b;388 450 365 460 b;447 451 390 490 b;445 452 385 480 b;365 452 355 458 w;368 371 335 470 b;368 420 350 437 b;418 440 390 460 b;438 620 430 695 b;619 622 589 668 b;488 620 435 695 w;448 488 367 490 w;397 447 395 447 w";
const candles=[];
const add=(s,base)=>s.split(';').forEach(c=>{const p=c.trim().split(' ');candles.push([base+p[0]/3,base+p[1]/3,base+p[2]/3,base+p[3]/3,p[4]]);});
add(G1,130);add(G2,130);add(G3,130);add(G4,0);
const xOf=k=>6.5+8*k;
candles.forEach((c,k)=>{
  const x=xOf(k);
  line(x,c[2],x,c[3],'#000',1,crisp);
  const h=Math.max(1,c[1]-c[0]);
  el('rect',{x:x-2,y:c[0],width:4,height:h,fill:c[4]==='w'?'#fff':'#000',stroke:'#000','stroke-width':1,...crisp});
});

// zigzag
const zz='#ba55d3';
pl(L([16,405,565,1460,995,660,1055,1133,1270,470,1465,1000]).concat(M([14,60,250,930,466,233,680,940,877,365,1033,1037,1367,372,1445,740])).concat([[1446,82]]),zz,2);
// dots
const gd='#3cb371',rd='#dc143c';
L([995,655,1250,510,1270,470,602,1040]).concat(M([14,60,0,215,368,410,466,233,838,470,877,365,1152,383,1367,372,1563,305])).concat([[1446,82]]).forEach(p=>el('circle',{cx:p[0],cy:p[1],r:3.8,fill:gd}));
L([1053,1133,1465,1000,563,1458]).concat(M([210,842,250,930,543,788,680,940,994,935,1033,1037,1386,702,1445,740])).forEach(p=>el('circle',{cx:p[0],cy:p[1],r:3.8,fill:rd}));

// RSI
const rs=[450,450,396,396,410,388,410,362,430,400,350,382,362,347,415,468,482,462,482,460,425,382,386,400,440,472,458,482,395,362,302,322,335,325,295,232,240,210,183,232,185,155,155,190,322,290,275,250,190,165,245,295,298,342,298,255,210,220,203,203,225,205,205,115,178,190,215,198,172,215,222,208,250,280,372,325,250,225,242,150,
68,137,137,180,283,258,283,275,322,302,345,360,377,340,300,270,237,237,215,215,177,173,137,177,285,310,310,373,388,367,393,288,322,388,362,362,340,288,332,285,277,278,198,193,175,180,258,247,258,375,408,380,415,380,288,248,205,210,203,238,205,255,262,280,235,255,245,203,205,207,322,310,337,352,295,240,203,207,222,160,
128,128,258,272,272,208,178,222,125,135,160,160,190,265,328,337,310,275,195,133,168,185,195,195,195,160,163,198,215,312,312,243,228,205];
const ry=z=>620+z/3;
const redR=[[0,34],[44,45],[51,54],[74,75],[88,94],[105,116],[129,134],[150,154],[174,176],[189,190]];
for(let k=0;k<193;k++){
  const isR=redR.some(r=>k>=r[0]&&k<r[1]);
  line(xOf(k),ry(rs[k]),xOf(k+1),ry(rs[k+1]),isR?'#ff0000':'#32cd32',1.8,{'stroke-linecap':'round'});
}
const dots=(ks,y,c)=>ks.forEach(k=>el('circle',{cx:xOf(k),cy:y,r:2.4,fill:c}));
const rng=(a,b)=>{const r=[];for(let i=a;i<=b;i++)r.push(i);return r;};
dots([...rng(11,16),...rng(32,36),48,49,...rng(51,63),...rng(73,79),100,101,...rng(121,124),131,...rng(152,160),176],715.5,'#000');
dots([37,38,49,50,64,65,...rng(81,84),102,103,124,125,161,162],682.5,'#32cd32');
dots([17,18,133,134],748.5,'#ff0000');

// MACD histogram
const mh=[760,760,748,730,725,713,710,700,705,703,695,688,680,675,685,708,723,727,732,728,717,698,695,685,687,697,697,705,692,680,660,650,648,645,640,628,625,618,612,617,618,615,615,628,652,665,673,677,670,663,665,680,695,708,710,708,695,685,678,672,672,675,673,657,653,660,668,672,670,680,685,688,693,708,728,732,718,712,705,680,
642,633,630,640,670,685,690,700,712,725,733,740,755,750,738,722,705,690,680,675,660,655,645,648,665,685,698,720,735,738,745,725,725,722,730,730,722,708,705,690,682,678,660,648,640,635,650,657,665,690,720,730,740,740,722,702,675,660,652,655,650,657,665,675,675,678,678,672,670,672,690,700,710,718,717,705,690,680,677,668,
650,645,663,675,688,686,682,678,658,652,652,655,663,685,710,730,730,728,712,682,672,665,668,672,675,672,672,677,688,708,722,718,713,705];
const zero=850.3;
mh.forEach((z,k)=>{const y=620+z/3,t=Math.min(y,zero),h=Math.abs(y-zero);rect(xOf(k)-2,t,4,Math.max(h,1),'#008000');});
const P4=a=>Z(0,2.45,620,a),P5=a=>Z(640,2.45,620,a),P6=a=>Z(1280,2.477,620,a);
sm(P4([16,785,60,820,120,840,190,850,290,843,400,885,540,890,600,887,700,790,850,690,870,680,1000,642,1110,660,1230,640,1350,597,1460,605,1568,640]).concat(P5([50,590,100,573,175,600,250,650,320,683,400,665,490,633,560,645,630,690,770,740,850,720,950,670,1080,715,1200,665,1350,645,1400,645,1470,667,1568,655])).concat(P6([40,628,170,612,230,582,270,572,380,612,450,590,570,575,620,592,670,602])),'#ff0000',1,{'stroke-dasharray':'2 2','stroke-linecap':'butt'});
sm(P4([16,855,35,867,95,867,115,860,135,860,153,853,173,860,192,860,212,850,232,848,270,830,290,843,330,890,370,917,395,917,430,893,450,883,490,885,510,895,530,898,548,907,580,885,620,835,682,792,740,710,800,670,855,620,880,640,915,650,940,650,985,620,1010,635,1065,670,1100,672,1150,645,1190,630,1231,628,1270,590,1350,585,1420,600,1465,645,1490,657,1520,650,1545,648,1568,610])
 .concat(P5([30,550,55,533,75,533,110,570,150,600,175,628,250,710,275,720,310,715,340,685,400,650,465,598,515,640,580,710,620,725,640,725,690,760,725,760,750,748,780,745,820,725,860,680,900,640,955,640,1000,700,1055,760,1090,735,1130,690,1190,640,1250,652,1310,645,1360,625,1385,640,1455,688,1475,688,1525,650,1545,650,1568,625]))
 .concat(P6([38,593,90,622,135,605,160,605,195,560,235,547,265,560,310,625,350,645,375,630,400,595,435,575,495,572,515,563,550,563,570,570,610,618,670,618])),'#1e90ff',2.4);

// window frames
rect(5,52,1865,1,'#000');
[[5.5,52.5,1864,579.5],[5.5,634.5,1864,152.5],[5.5,789.5,1864,143.5]].forEach(f=>el('rect',{x:f[0],y:f[1],width:f[2],height:f[3],fill:'none',stroke:'#000',...crisp}));
line(5,632.5,1870,632.5,'#000',1.4,crisp);
line(5,787.5,1870,787.5,'#000',1.4,crisp);
// axis ticks
for(let y=62;y<632;y+=33.4)line(1870,y,1873,y,'#000',1,crisp);
for(let k=0;k<25;k++)line(6.5+64*k,933,6.5+64*k,937,'#000',1,crisp);

// drawn objects on top
function arrow(x1,y1,x2,y2,c,w,hl,hw,p){
  const a=Math.atan2(y2-y1,x2-x1),bx=x2-hl*Math.cos(a),by=y2-hl*Math.sin(a);
  line(x1,y1,bx,by,c,w,{},p);
  el('polygon',{points:[x2,y2,bx-hw*Math.sin(a),by+hw*Math.cos(a),bx+hw*Math.sin(a),by-hw*Math.cos(a)].join(' '),fill:c},p);
}
line(646,150,1277,270,'#87cefa',6,{},over);
rect(760,440,158,3,'#5a78c8',over);
line(760,441,1282,502.5,'#a8d8fa',4,{},over);
line(753,52.7,1869.5,215.3,'#000',2.4,{},over);
rect(410,118,1189,4.5,'#c99a0b',over);
line(175.5,481.7,1105,481.7,'#0000e6',3.4,{},over);
rect(159,565,4,363,'#ffa500',over);
rect(221,620,4,308,'#ffa500',over);
const ar=[[91,248,118,363,'#ff4500',2],[235,265,173,552,'#ff0000',2],[445,269,413,337,'#008000',2],[473,270,442,438,'#008000',2],[329,567,249,492,'#9400d3',2.4],[735,543,451,498,'#3000e8',2],[936,534,1060,490,'#3000e8',2],[875,164,785,129,'#cd9600',2],[1140,176,1207,130,'#cd9600',2],[316,754,169,777,'#000',2],[320,767,238,781,'#000',2],[345,877,167,923,'#000',2],[339,900,233,926,'#000',2]];
ar.forEach(a=>arrow(a[0],a[1],a[2],a[3],a[4],a[5],20,5.5,over));
// small signal arrows
[[942,428,942,404],[1276,316,1276,292]].forEach(a=>arrow(a[0],a[1],a[2],a[3],'#1e90ff',4,11,8,over));
</script>
</body>
</html>
